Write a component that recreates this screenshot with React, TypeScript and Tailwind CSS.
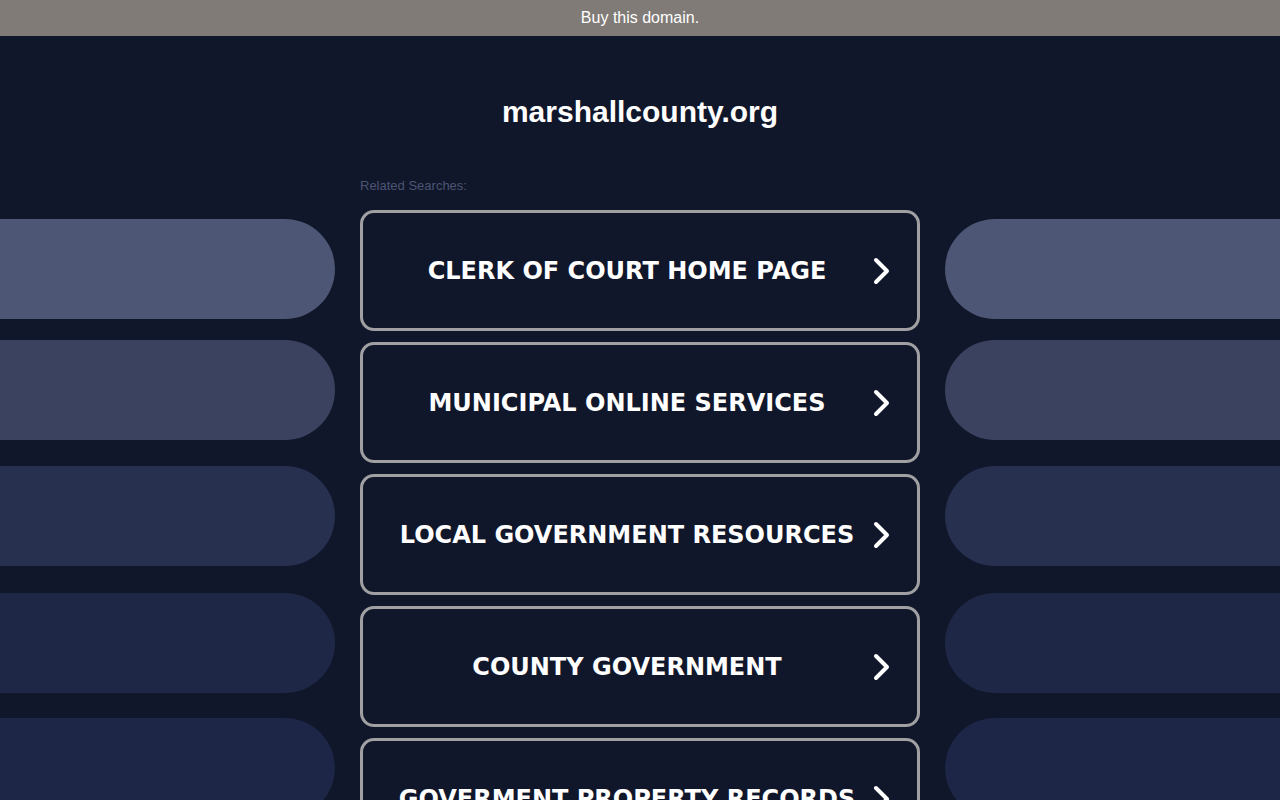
import React from 'react';

const searches = [
  'CLERK OF COURT HOME PAGE',
  'MUNICIPAL ONLINE SERVICES',
  'LOCAL GOVERNMENT RESOURCES',
  'COUNTY GOVERNMENT',
  'GOVERMENT PROPERTY RECORDS',
];

// pill colour + gap above it
const pills = [
  { c: 'bg-[#4d5674]', m: 'mt-[219px]' },
  { c: 'bg-[#3a4260]', m: 'mt-[21px]' },
  { c: 'bg-[#283050]', m: 'mt-[26px]' },
  { c: 'bg-[#1f2747]', m: 'mt-[27px]' },
  { c: 'bg-[#1d2646]', m: 'mt-[25px]' },
];

const Chevron = () => (
  <svg width="22" height="28" viewBox="0 0 22 28" fill="none">
    <path d="M5 3 L16 14 L5 25" stroke="white" strokeWidth="4" strokeLinecap="round" strokeLinejoin="round" />
  </svg>
);

const SidePills = ({ side }: { side: 'left' | 'right' }) => (
  <div className="flex flex-col w-[335px] shrink-0">
    {pills.map((p, i) => (
      <div
        key={i}
        className={`h-[100px] w-full shrink-0 ${p.c} ${p.m} ${side === 'left' ? 'rounded-r-[50px]' : 'rounded-l-[50px]'}`}
      />
    ))}
  </div>
);

export default function App() {
  return (
    <div className="w-[1280px] h-[800px] overflow-hidden bg-[#11172b] flex flex-col" style={{ fontFamily: '"Liberation Sans", Arial, sans-serif' }}>
      <div className="h-9 shrink-0 bg-[#807b77] flex items-center justify-center text-white text-base">
        Buy this domain.
      </div>
      <div className="relative flex-1">
        <div className="absolute inset-0 flex justify-between -mt-9">
          <SidePills side="left" />
          <SidePills side="right" />
        </div>
        <div className="relative flex flex-col items-center">
          <h1 className="mt-[58px] text-[30px] leading-[36px] font-bold text-white">marshallcounty.org</h1>
          <div className="w-[560px] mt-[48px]">
            <div className="text-[13px] leading-[16px] text-[#4b5472] mb-[16px]">Related Searches:</div>
            <div className="flex flex-col gap-[11px]">
              {searches.map((s) => (
                <div
                  key={s}
                  className="h-[121px] shrink-0 border-[3px] border-[#a0a0a2] rounded-[14px] flex items-center pl-[30px] pr-[24px] gap-[10px]"
                >
                  <div
                    className="flex-1 text-center text-white font-bold text-[24px] whitespace-nowrap"
                    style={{ fontFamily: '"DejaVu Sans", Verdana, sans-serif' }}
                  >
                    {s}
                  </div>
                  <Chevron />
                </div>
              ))}
            </div>
          </div>
        </div>
      </div>
    </div>
  );
}
